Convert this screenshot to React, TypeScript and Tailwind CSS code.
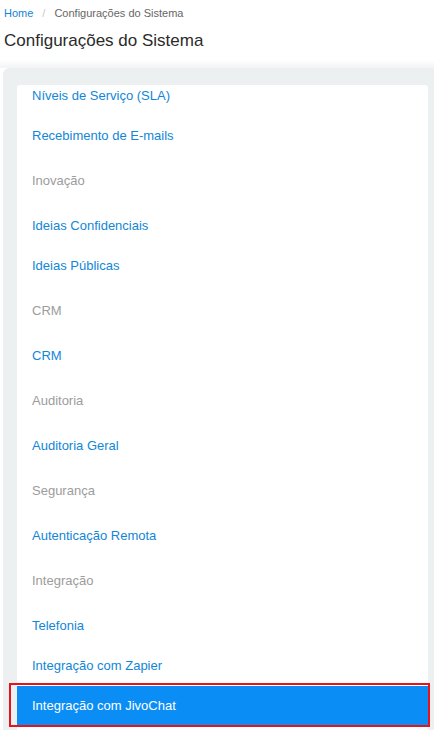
import React from "react";

type Item = { label: string; header?: boolean; active?: boolean };

const items: Item[] = [
  { label: "Níveis de Serviço (SLA)" },
  { label: "Recebimento de E-mails" },
  { label: "Inovação", header: true },
  { label: "Ideias Confidenciais" },
  { label: "Ideias Públicas" },
  { label: "CRM", header: true },
  { label: "CRM" },
  { label: "Auditoria", header: true },
  { label: "Auditoria Geral" },
  { label: "Segurança", header: true },
  { label: "Autenticação Remota" },
  { label: "Integração", header: true },
  { label: "Telefonia" },
  { label: "Integração com Zapier" },
  { label: "Integração com JivoChat", active: true },
];

export default function App() {
  return (
    <div
      className="relative w-[434px] h-[730px] overflow-hidden bg-white"
      style={{ fontFamily: '"Helvetica Neue", "Liberation Sans", Arial, sans-serif' }}
    >
      <div className="px-[4px] pt-[6px] text-[11px] leading-[14px] flex items-center">
        <span className="text-[#1484d6]">Home</span>
        <span className="text-[#c8c8c8] mx-[9px]">/</span>
        <span className="text-[#666]">Configurações do Sistema</span>
      </div>
      <h1 className="px-[4px] mt-[10px] text-[17px] leading-[22px] text-[#2b2b2b]">
        Configurações do Sistema
      </h1>
      <div className="mt-[8px] h-[8px] bg-gradient-to-b from-white to-[#f2f4f5]" />
      <div className="pl-[3px]">
        <div className="bg-[#edf0f1] rounded-tl-[6px] pt-[17px] pl-[14px] pr-[6px] h-[700px]">
          <div className="bg-white rounded-t-[3px] overflow-hidden h-[680px]">
            <div className="-mt-[9px]">
              {items.map((it, i) =>
                it.header ? (
                  <div
                    key={i}
                    className="h-[50px] flex items-center px-[15px] text-[13px] text-[#9c9c9c]"
                  >
                    {it.label}
                  </div>
                ) : it.active ? (
                  <div
                    key={i}
                    className="h-[40px] flex items-center px-[15px] text-[13px] text-white bg-[#0b8df6]"
                  >
                    {it.label}
                  </div>
                ) : (
                  <div
                    key={i}
                    className="h-[40px] flex items-center px-[15px] text-[13px] text-[#1286d8]"
                  >
                    {it.label}
                  </div>
                )
              )}
            </div>
          </div>
        </div>
      </div>
      <div className="absolute left-[9px] top-[683px] w-[421px] h-[44px] border-2 border-[#e5141c]" />
    </div>
  );
}
